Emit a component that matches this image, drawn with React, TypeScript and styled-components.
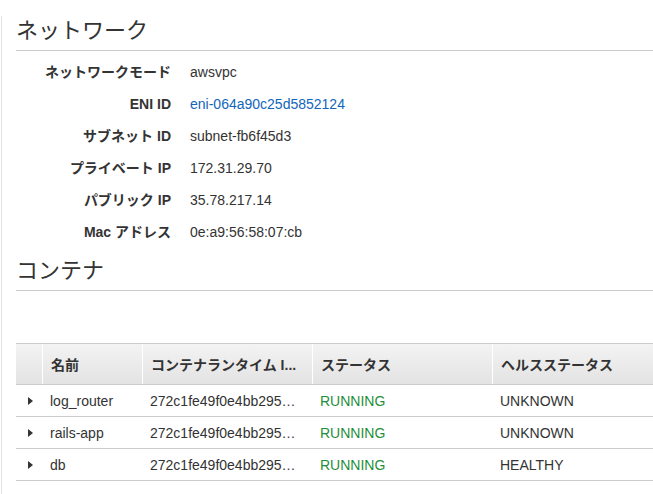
import React from "react";
import styled, { createGlobalStyle } from "styled-components";

const GlobalStyle = createGlobalStyle`
  html, body {
    margin: 0;
    padding: 0;
    background: #ffffff;
  }
  body {
    font-family: "Liberation Sans", "Noto Sans CJK JP", Arial, sans-serif;
    color: #333333;
    font-size: 14px;
  }
`;

const Page = styled.div`
  margin-left: 1px;
  border-left: 1px solid #e3e3e3;
  padding-left: 14px;
  min-height: 494px;
  box-sizing: border-box;
`;

const SectionTitle = styled.h2<{ $first?: boolean }>`
  margin: ${(p) => (p.$first ? "16px" : "8px")} 0 0 0;
  padding: 0 0 4px 0;
  font-size: 22px;
  line-height: 30px;
  font-weight: 400;
  color: #333333;
  border-bottom: 1px solid #cccccc;
  font-family: "Liberation Sans", "Noto Sans CJK JP", sans-serif;
`;

const KeyValueList = styled.dl`
  display: grid;
  grid-template-columns: 155px 1fr;
  column-gap: 19px;
  grid-auto-rows: 32px;
  margin: 5px 0 0 0;
`;

const Label = styled.dt`
  margin: 0;
  text-align: right;
  font-weight: 700;
  font-size: 14px;
  line-height: 32px;
  color: #333333;
  white-space: nowrap;
`;

const Value = styled.dd<{ $link?: boolean }>`
  margin: 0;
  font-size: 14px;
  line-height: 32px;
  color: ${(p) => (p.$link ? "#1166bb" : "#333333")};
  white-space: nowrap;
`;

const Table = styled.div`
  margin-top: 52px;
  border-top: 1px solid #cccccc;
`;

const gridCols = "26px 100px 170px 180px 1fr";

const HeaderRow = styled.div`
  display: grid;
  grid-template-columns: ${gridCols};
  height: 40px;
  background: linear-gradient(#f3f3f3, #e3e3e3);
  border-bottom: 1px solid #cccccc;
`;

const HeaderCell = styled.div<{ $divider?: boolean }>`
  display: flex;
  align-items: center;
  padding: 0 8px;
  font-weight: 700;
  font-size: 14px;
  color: #333333;
  border-left: ${(p) => (p.$divider ? "1px solid #ffffff" : "none")};
  white-space: nowrap;
  min-width: 0;
`;

const Row = styled.div`
  display: grid;
  grid-template-columns: ${gridCols};
  height: 31px;
  border-bottom: 1px solid #cccccc;
`;

const Cell = styled.div<{ $tone?: "ok" }>`
  display: flex;
  align-items: center;
  padding: 0 8px;
  font-size: 14px;
  color: ${(p) => (p.$tone === "ok" ? "#1d8f3a" : "#333333")};
  min-width: 0;
  white-space: nowrap;
`;

const ExpandCell = styled.div`
  display: flex;
  align-items: center;
  justify-content: center;
  padding-left: 2px;
`;

const Caret = styled.span`
  width: 0;
  height: 0;
  border-left: 5px solid #333333;
  border-top: 4px solid transparent;
  border-bottom: 4px solid transparent;
`;

const network = [
  { label: "ネットワークモード", value: "awsvpc" },
  { label: "ENI ID", value: "eni-064a90c25d5852124", link: true },
  { label: "サブネット ID", value: "subnet-fb6f45d3" },
  { label: "プライベート IP", value: "172.31.29.70" },
  { label: "パブリック IP", value: "35.78.217.14" },
  { label: "Mac アドレス", value: "0e:a9:56:58:07:cb" },
];

const containers = [
  { name: "log_router", runtime: "272c1fe49f0e4bb295…", status: "RUNNING", health: "UNKNOWN" },
  { name: "rails-app", runtime: "272c1fe49f0e4bb295…", status: "RUNNING", health: "UNKNOWN" },
  { name: "db", runtime: "272c1fe49f0e4bb295…", status: "RUNNING", health: "HEALTHY" },
];

const headers = ["名前", "コンテナランタイム I...", "ステータス", "ヘルスステータス"];

export default function App() {
  return (
    <>
      <GlobalStyle />
      <Page>
        <SectionTitle $first>ネットワーク</SectionTitle>
        <KeyValueList>
          {network.map((n) => (
            <React.Fragment key={n.label}>
              <Label>{n.label}</Label>
              <Value $link={n.link}>{n.value}</Value>
            </React.Fragment>
          ))}
        </KeyValueList>
        <SectionTitle>コンテナ</SectionTitle>
        <Table>
          <HeaderRow>
            <HeaderCell />
            {headers.map((h) => (
              <HeaderCell key={h} $divider>
                {h}
              </HeaderCell>
            ))}
          </HeaderRow>
          {containers.map((c) => (
            <Row key={c.name}>
              <ExpandCell>
                <Caret />
              </ExpandCell>
              <Cell>{c.name}</Cell>
              <Cell>{c.runtime}</Cell>
              <Cell $tone="ok">{c.status}</Cell>
              <Cell>{c.health}</Cell>
            </Row>
          ))}
        </Table>
      </Page>
    </>
  );
}
